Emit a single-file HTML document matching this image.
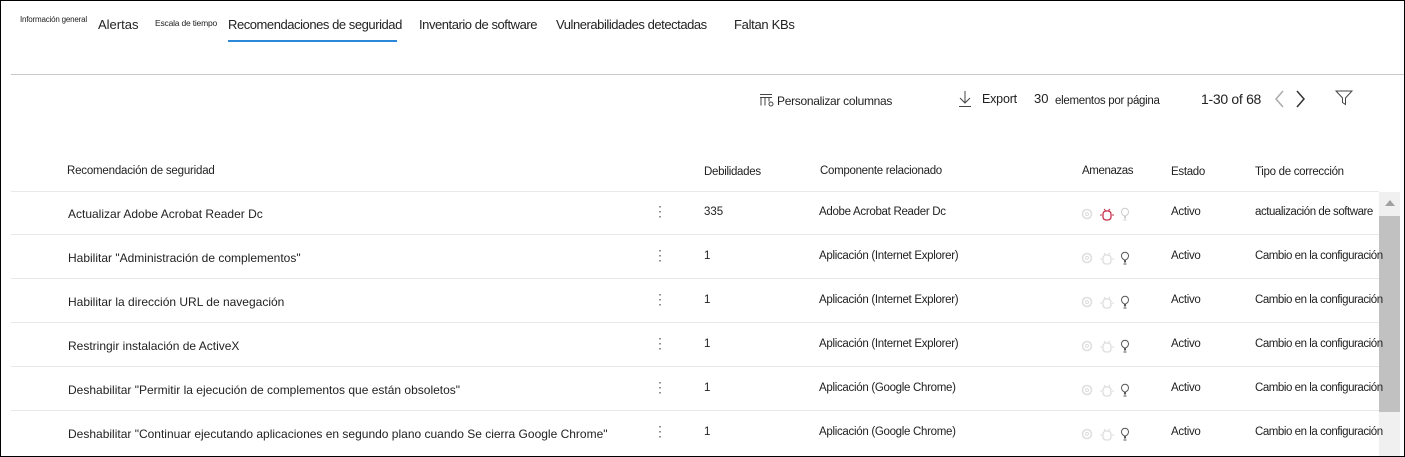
<!DOCTYPE html><html><head><meta charset="utf-8"><style>
body{margin:0;width:1405px;height:457px;overflow:hidden;font-family:"Liberation Sans",sans-serif;color:#222;background:#fff}
.frame{position:absolute;left:0;top:0;width:1403px;height:455px;border:1px solid #000;overflow:hidden}
.a{position:absolute;white-space:nowrap}
.hl{position:absolute;left:10px;width:1368px;height:1px;background:#e8e8e8}
.tp{z-index:2}
</style></head><body><div class="frame">
<div class="a" style="left:19px;top:14px;font-size:8px;letter-spacing:-0.2px">Información general</div>
<div class="a" style="left:97px;top:16px;font-size:13px">Alertas</div>
<div class="a" style="left:154px;top:17px;font-size:8.5px;letter-spacing:-0.2px">Escala de tiempo</div>
<div class="a" style="left:227px;top:16px;font-size:13px;letter-spacing:-0.45px">Recomendaciones de seguridad</div>
<div style="position:absolute;left:227px;top:39px;width:169px;height:2px;background:#2b88d8"></div>
<div class="a" style="left:418px;top:16px;font-size:13px;letter-spacing:-0.45px">Inventario de software</div>
<div class="a" style="left:555px;top:16px;font-size:13px;letter-spacing:-0.45px">Vulnerabilidades detectadas</div>
<div class="a" style="left:733px;top:16px;font-size:13px;letter-spacing:-0.3px">Faltan KBs</div>
<div style="position:absolute;left:10px;top:73px;width:1393px;height:1px;background:#c8c8c8"></div>

<svg class="a" style="left:758px;top:92px" width="16" height="14" viewBox="0 0 16 14" fill="none" stroke="#444"><path d="M1 1.5h12M1 4.5h12M2 4.5v8M6 4.5v8M10 4.5v4"/><circle cx="12" cy="11" r="2"/></svg>
<div class="a" style="left:776px;top:93px;font-size:12px;letter-spacing:-0.3px">Personalizar columnas</div>
<svg class="a" style="left:957px;top:89px" width="14" height="18" viewBox="0 0 14 18" fill="none" stroke="#444"><path d="M7 1v12M2 8l5 5 5-5M1 16.5h12"/></svg>
<div class="a" style="left:981px;top:91px;font-size:12.5px;letter-spacing:-0.2px">Export</div>
<div class="a" style="left:1033px;top:90px;font-size:13px">30</div>
<div class="a" style="left:1054px;top:94px;font-size:11.5px;letter-spacing:-0.3px">elementos por página</div>
<div class="a" style="left:1200px;top:90px;font-size:14px;letter-spacing:-0.3px">1-30 of 68</div>
<svg class="a" style="left:1272px;top:89px" width="40" height="18" viewBox="0 0 40 18" fill="none" stroke-width="1.5"><path d="M10 1L3 9l7 8" stroke="#aaa"/><path d="M24 1l7 8-7 8" stroke="#333"/></svg>
<svg class="a" style="left:1334px;top:89px" width="18" height="16" viewBox="0 0 18 16" fill="none" stroke="#444"><path d="M1 1h16l-6.5 7v6.5l-3-2V8z"/></svg>

<div class="a" style="left:66px;top:164px;font-size:11.5px;letter-spacing:-0.2px">Recomendación de seguridad</div>
<div class="a" style="left:703px;top:165px;font-size:11.5px;letter-spacing:-0.3px">Debilidades</div>
<div class="a" style="left:819px;top:164px;font-size:11.5px;letter-spacing:-0.3px">Componente relacionado</div>
<div class="a" style="left:1081px;top:164px;font-size:11.5px;letter-spacing:-0.4px">Amenazas</div>
<div class="a" style="left:1170px;top:165px;font-size:11.5px;letter-spacing:-0.3px">Estado</div>
<div class="a" style="left:1254px;top:165px;font-size:11.5px;letter-spacing:-0.3px">Tipo de corrección</div>
<div class="hl" style="top:190px"></div>

<div id="rows"></div>
<script>
var R=[["Actualizar Adobe Acrobat Reader Dc","335","Adobe Acrobat Reader Dc","actualización de software",1],
["Habilitar \"Administración de complementos\"","1","Aplicación (Internet Explorer)","Cambio en la configuración",0],
["Habilitar la dirección URL de navegación","1","Aplicación (Internet Explorer)","Cambio en la configuración",0],
["Restringir instalación de ActiveX","1","Aplicación (Internet Explorer)","Cambio en la configuración",0],
["Deshabilitar \"Permitir la ejecución de complementos que están obsoletos\"","1","Aplicación (Google Chrome)","Cambio en la configuración",0],
["Deshabilitar \"Continuar ejecutando aplicaciones en segundo plano cuando Se cierra Google Chrome\"","1","Aplicación (Google Chrome)","Cambio en la configuración",0]];
var h="";R.forEach(function(r,i){var y=190+i*44;var t=y+15;
h+='<div class="a" style="left:67px;top:'+(t+1)+'px;font-size:12px">'+r[0].replace(/"/g,'&quot;')+'</div>';
h+='<div class="a" style="left:652px;top:'+(t-3)+'px;font-size:14px;color:#666">⋮</div>';
h+='<div class="a" style="left:703px;top:'+t+'px;font-size:11.5px">'+r[1]+'</div>';
h+='<div class="a" style="left:818px;top:'+t+'px;font-size:11.5px;letter-spacing:-0.3px">'+r[2]+'</div>';
var bc=r[4]?'#c4314b':'#ddd',lc=r[4]?'#ccc':'#555';
h+='<svg class="a" style="left:1080px;top:'+(t+1)+'px" width="50" height="14" viewBox="0 0 50 14" fill="none"><circle cx="6" cy="7" r="4.5" stroke="#ddd" stroke-width="1.5"/><circle cx="6" cy="7" r="1.5" stroke="#ddd"/><rect x="22" y="4" width="8" height="9" rx="3" stroke="'+bc+'" stroke-width="1.3"/><path d="M23 2l2 2M29 2l-2 2M21 8h-2M31 8h2" stroke="'+bc+'"/><path d="M43.5 11v-2c-2-1-3-2.5-3-4.3a3.5 3.5 0 017 0c0 1.8-1 3.3-3 4.3v2zM42.5 13h3" stroke="'+lc+'"/></svg>';
h+='<div class="a" style="left:1170px;top:'+t+'px;font-size:11.5px;letter-spacing:-0.3px">Activo</div>';
h+='<div class="a tp" style="left:1254px;top:'+t+'px;font-size:11.5px;letter-spacing:-0.45px">'+r[3]+'</div>';
if(i<5)h+='<div class="hl" style="top:'+(y+43)+'px"></div>';});
document.getElementById("rows").innerHTML=h;
</script>
<div style="position:absolute;left:1378px;top:191px;width:21px;height:265px;background:#f0f0f0"></div>
<div style="position:absolute;left:1384px;top:199px;width:0;height:0;border-left:5px solid transparent;border-right:5px solid transparent;border-bottom:6px solid #a0a0a0"></div>
<div style="position:absolute;left:1378px;top:215px;width:21px;height:196px;background:#c1c1c1"></div>
</div></body></html>
